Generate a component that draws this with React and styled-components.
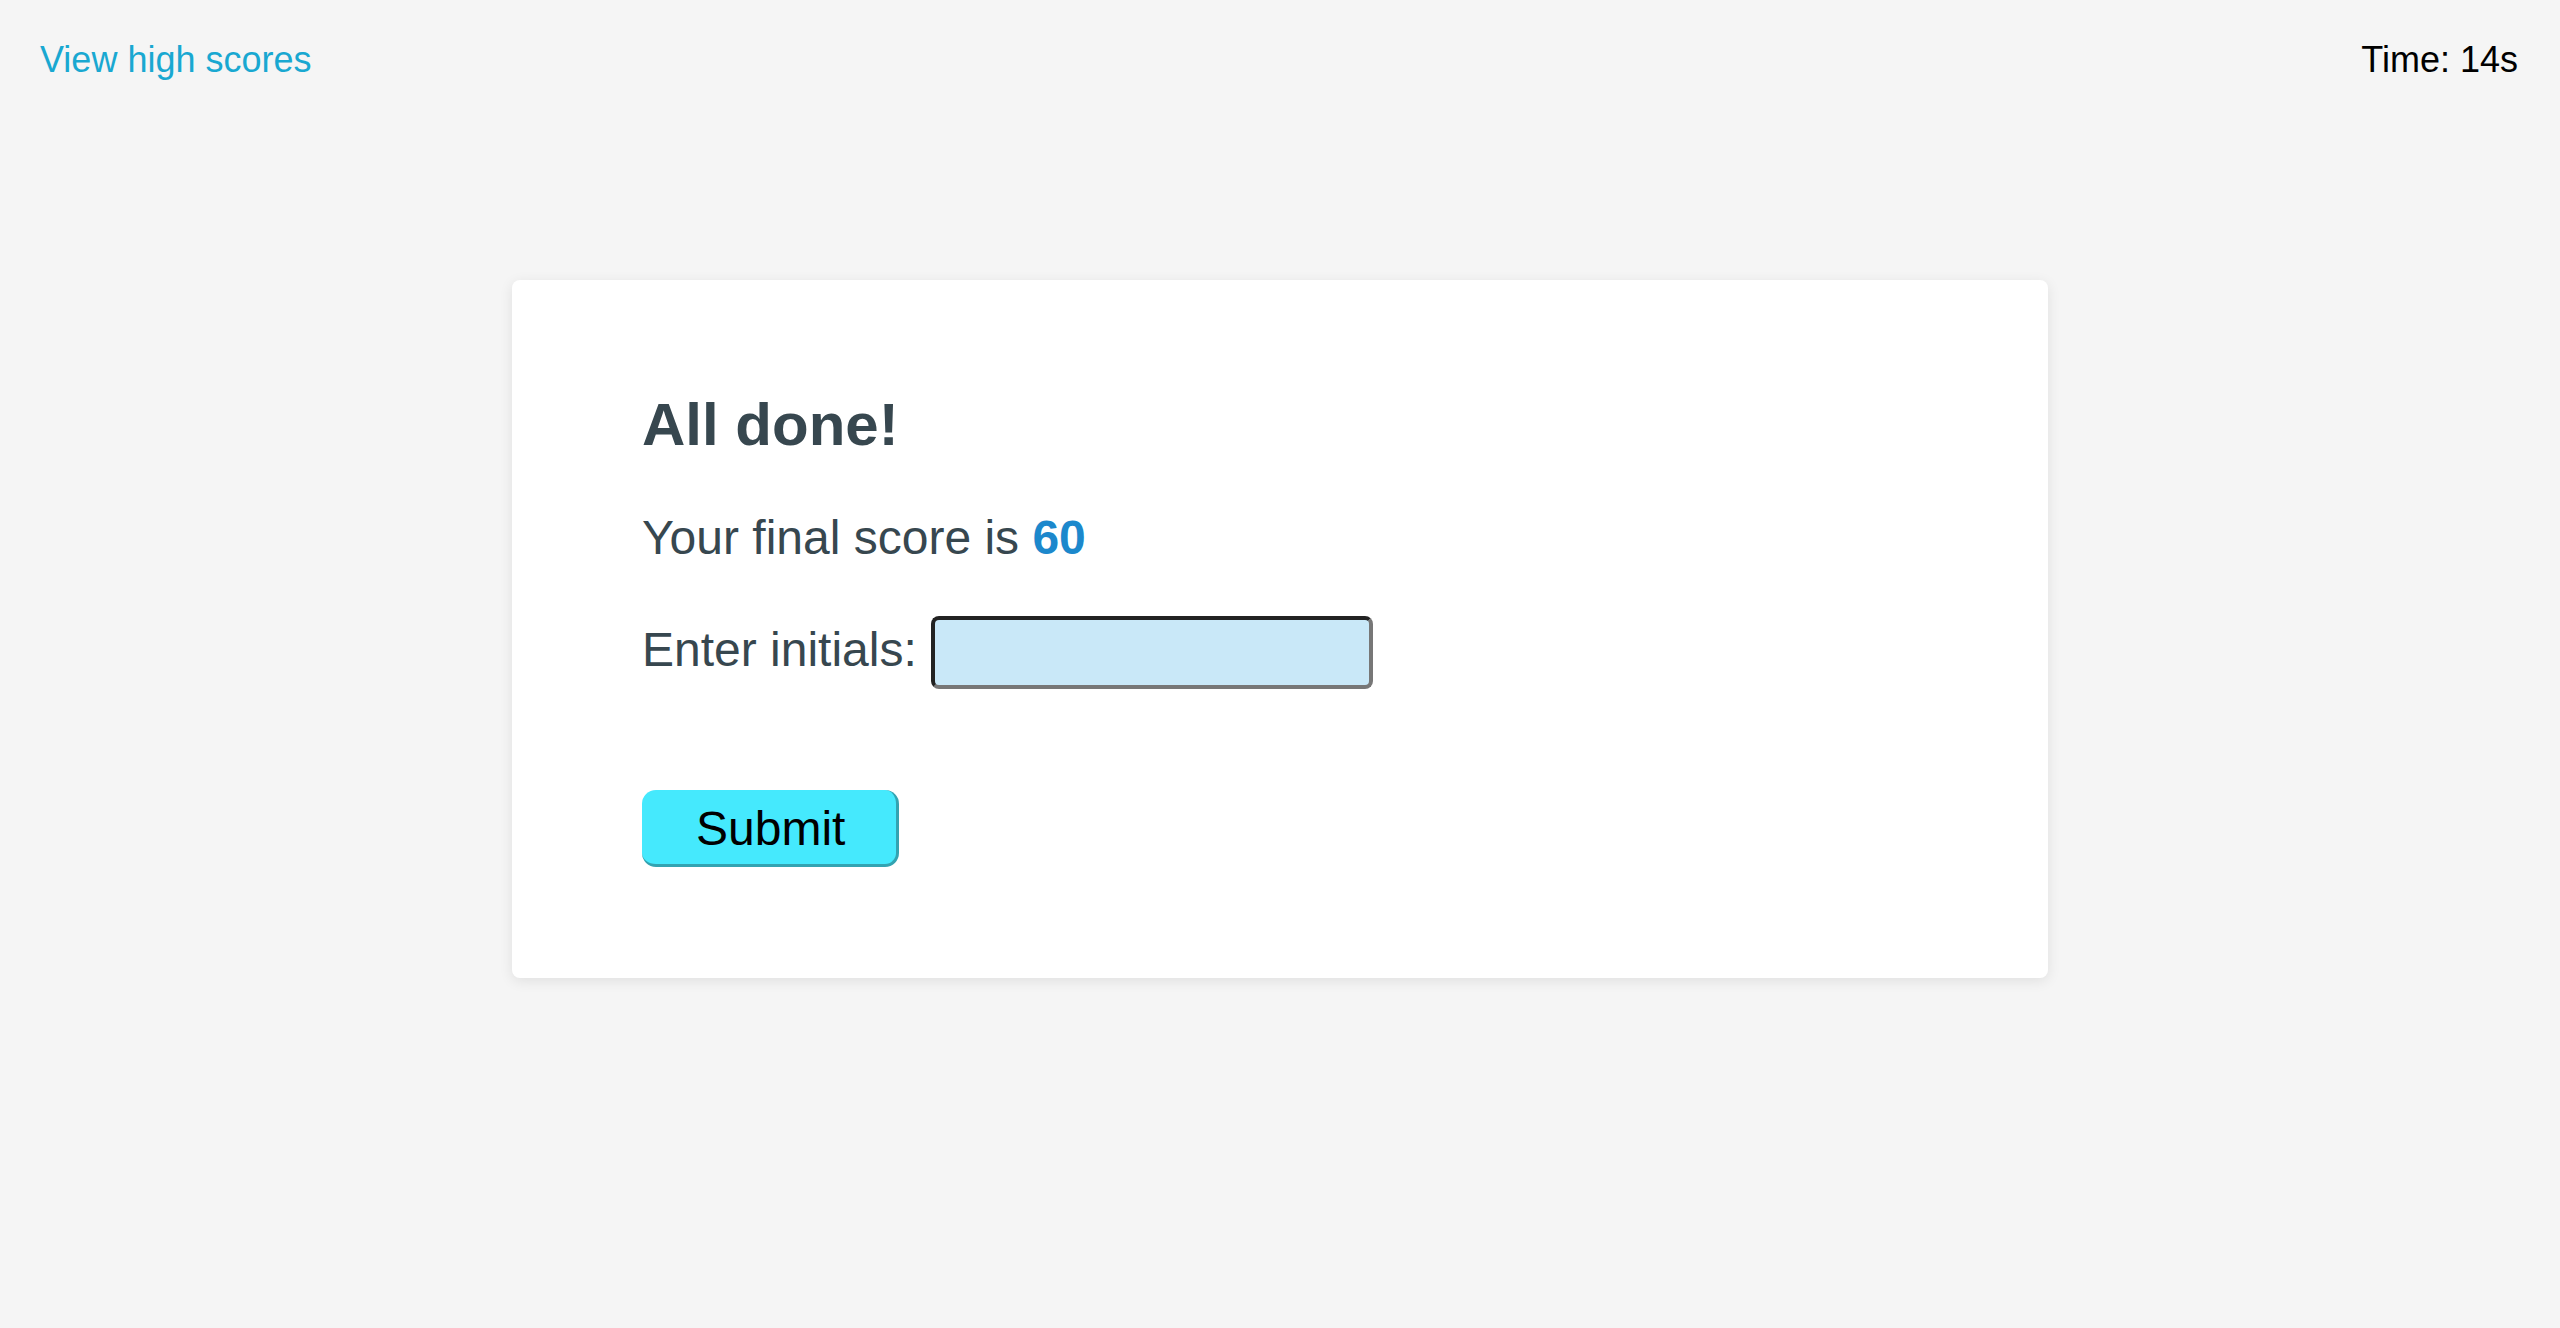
import React, { useState } from "react";
import styled, { createGlobalStyle } from "styled-components";

const GlobalStyle = createGlobalStyle`
  html, body {
    margin: 0;
    padding: 0;
    background: #f5f5f5;
    font-family: "Liberation Sans", Arial, Helvetica, sans-serif;
  }
`;

const Page = styled.div`
  min-height: 1328px;
  background: #f5f5f5;
`;

const Header = styled.header`
  display: flex;
  justify-content: space-between;
  align-items: baseline;
  padding: 39px 42px 0 40px;
  font-size: 36px;
  line-height: 41px;
`;

const HighScoresLink = styled.a`
  color: #19a8d1;
  text-decoration: none;
  cursor: pointer;
`;

const Timer = styled.div`
  color: #000;
`;

const Card = styled.main`
  width: 1536px;
  box-sizing: border-box;
  margin: 200px auto 0;
  padding: 110px 130px 111px;
  background: #fff;
  border-radius: 8px;
  box-shadow: 0 3px 14px rgba(0, 0, 0, 0.09);
  color: #37474f;
`;

const Title = styled.h2`
  margin: 0;
  font-size: 60px;
  line-height: 69px;
  font-weight: 700;
`;

const ScoreLine = styled.p`
  margin: 51px 0 0;
  font-size: 48px;
  line-height: 55px;
`;

const Score = styled.b`
  color: #1c88cc;
`;

const InitialsRow = styled.form`
  display: flex;
  align-items: flex-start;
  gap: 14px;
  margin-top: 51px;
  font-size: 48px;
  line-height: 55px;
`;

const Label = styled.label`
  margin-top: 6px;
`;

const InitialsInput = styled.input`
  width: 442px;
  height: 73px;
  box-sizing: border-box;
  border: 4px solid;
  border-color: #222 #777 #777 #222;
  border-radius: 8px;
  background: #c9e8f8;
  font-family: inherit;
  font-size: 32px;
  padding: 0 10px;
  outline: none;
`;

const SubmitButton = styled.button`
  display: block;
  margin-top: 101px;
  padding: 11px 51px 8px 54px;
  border: 0;
  border-right: 3px solid #33a3b1;
  border-bottom: 3px solid #33a3b1;
  border-radius: 14px;
  background: #45e9fd;
  color: #000;
  font-family: inherit;
  font-size: 48px;
  line-height: 55px;
  cursor: pointer;
`;

export default function App() {
  const [initials, setInitials] = useState("");

  return (
    <Page>
      <GlobalStyle />
      <Header>
        <HighScoresLink>View high scores</HighScoresLink>
        <Timer>Time: 14s</Timer>
      </Header>

      <Card>
        <Title>All done!</Title>
        <ScoreLine>
          Your final score is <Score>60</Score>
        </ScoreLine>
        <InitialsRow onSubmit={(e) => e.preventDefault()}>
          <Label htmlFor="initials">Enter initials:</Label>
          <InitialsInput
            id="initials"
            value={initials}
            onChange={(e) => setInitials(e.target.value)}
          />
        </InitialsRow>
        <SubmitButton type="button">Submit</SubmitButton>
      </Card>
    </Page>
  );
}
